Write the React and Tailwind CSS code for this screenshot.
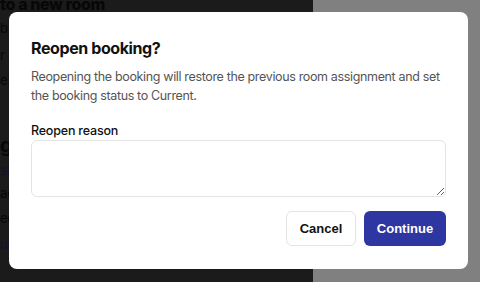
export default function App() {
  const behind = [
    { t: "b", cls: "mt-[4px] text-[13px]" },
    { t: "r / night", cls: "mt-[9px] text-[13px]" },
    { t: "e: 2", cls: "mt-[7px] text-[13px]" },
    { t: "g details", cls: "mt-[44px] text-[20px] font-bold leading-[24px]" },
    { t: "st", cls: "mt-[4px] text-[13px] text-[#12122e]" },
    { t: "ac", cls: "mt-[5px] text-[13px]" },
    { t: "ee", cls: "mt-[7px] text-[13px]" },
    { t: "ui", cls: "mt-[8px] text-[13px] text-[#12122e]" },
  ];

  return (
    <div
      className="relative w-[480px] h-[282px] overflow-hidden flex"
      style={{ fontFamily: "Inter, 'Noto Sans', sans-serif" }}
    >
      {/* dimmed page behind the dialog */}
      <div className="w-[313px] h-full bg-[#1b1b1b] overflow-hidden flex flex-col text-[#070707]">
        <div className="-mt-[7px] text-[16px] font-extrabold leading-[22px] tracking-tight whitespace-nowrap">
          to a new room
        </div>
        {behind.map((l, i) => (
          <div key={i} className={`leading-[18px] whitespace-nowrap ${l.cls}`}>
            {l.t}
          </div>
        ))}
      </div>
      <div className="flex-1 h-full bg-[#808080]" />

      {/* dialog */}
      <div className="absolute left-[9px] top-[12px] w-[459px] bg-white rounded-[8px] px-[22px] pt-[24px] pb-[23px] flex flex-col">
        <h2 className="text-[16px] font-bold leading-[24px] tracking-[-0.4px] text-[#111]">
          Reopen booking?
        </h2>
        <p className="mt-[7px] text-[12.5px] leading-[19px] tracking-[-0.35px] text-[#555]">
          Reopening the booking will restore the previous room assignment and set
          the booking status to Current.
        </p>
        <label className="mt-[17px] text-[12.5px] font-medium leading-[18px] tracking-[-0.2px] text-[#111]">
          Reopen reason
        </label>
        <textarea className="mt-0 w-full h-[57px] rounded-[6px] border border-[#e4e4e4] bg-white outline-none" />
        <div
          className="mt-[14px] flex justify-end gap-[8px] text-[13px] font-bold"
          style={{ fontFamily: "'Liberation Sans', Arial, sans-serif" }}
        >
          <button className="w-[70px] h-[35px] rounded-[6px] border border-[#e4e4e4] bg-white text-[#111]">
            Cancel
          </button>
          <button className="w-[82px] h-[35px] rounded-[6px] bg-[#2e36a1] text-white">
            Continue
          </button>
        </div>
      </div>
    </div>
  );
}
